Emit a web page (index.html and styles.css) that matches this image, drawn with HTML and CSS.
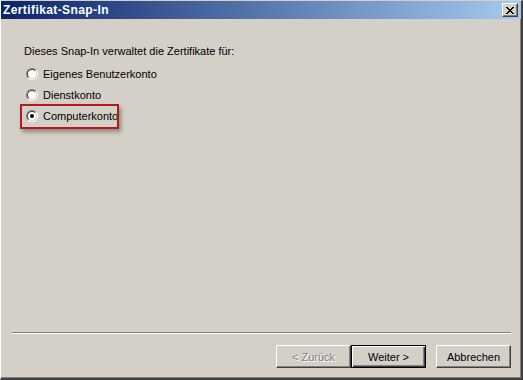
FILE: index.html
```html
<!DOCTYPE html>
<html lang="de">
<head>
<meta charset="utf-8">
<title>Zertifikat-Snap-In</title>
<link rel="stylesheet" href="styles.css">
</head>
<body>
<div class="window">
  <div class="titlebar">
    <span class="title">Zertifikat-Snap-In</span>
    <button class="close" aria-label="Schließen">
      <svg width="8" height="7" viewBox="0 0 8 7"><path d="M0 0h2v1h1v1h2V1h1V0h2v1H7v1H6v1H5v1h1v1h1v1h1v1H6V6H5V5H3v1H2v1H0V6h1V5h1V4h1V3H2V2H1V1H0z" fill="#000"/></svg>
    </button>
  </div>
  <div class="content">
    <p class="intro">Dieses Snap-In verwaltet die Zertifikate für:</p>
    <div class="options">
      <label class="option"><span class="radio"><span class="radio-in"></span></span><span>Eigenes Benutzerkonto</span></label>
      <label class="option"><span class="radio"><span class="radio-in"></span></span><span>Dienstkonto</span></label>
      <label class="option highlighted"><span class="radio"><span class="radio-in"><span class="dot"></span></span></span><span>Computerkonto</span><span class="mark"></span></label>
    </div>
  </div>
  <div class="footer">
    <div class="separator"></div>
    <div class="buttons">
      <div class="pair">
        <button class="btn disabled">&lt; Zurück</button>
        <button class="btn default">Weiter &gt;</button>
      </div>
      <button class="btn">Abbrechen</button>
    </div>
  </div>
</div>
</body>
</html>
```
FILE: styles.css
```css
html, body {
  margin: 0;
  padding: 0;
  background: #d4d0c8;
}
body {
  width: 523px;
  height: 380px;
  overflow: hidden;
  font-family: "Liberation Sans", Arial, sans-serif;
  font-size: 11px;
  color: #000;
}
.window {
  box-sizing: border-box;
  width: 523px;
  height: 380px;
  display: flex;
  flex-direction: column;
  background: #d4d0c8;
  border-top: 1px solid #d4d0c8;
  border-left: 1px solid #ffffff;
  border-right: 2px solid #404040;
  border-bottom: 2px solid #404040;
  box-shadow: inset -1px -1px 0 #808080;
}
.titlebar {
  height: 18px;
  display: flex;
  align-items: center;
  justify-content: space-between;
  padding: 0 3px 0 2px;
  background: linear-gradient(to right, #0a246a, #a6caf0);
  flex: none;
}
.title {
  color: #fff;
  font-weight: bold;
  font-size: 12px;
  letter-spacing: 0.4px;
}
.close {
  box-sizing: border-box;
  width: 16px;
  height: 14px;
  padding: 0;
  display: flex;
  align-items: center;
  justify-content: center;
  background: #d4d0c8;
  border: 1px solid;
  border-color: #ffffff #404040 #404040 #ffffff;
  box-shadow: inset -1px -1px 0 #808080;
}
.content {
  flex: 1;
  padding: 25px 0 0 23px;
}
.intro {
  margin: 0 0 5px 0;
  line-height: 14px;
}
.options {
  display: flex;
  flex-direction: column;
}
.option {
  position: relative;
  display: flex;
  align-items: center;
  height: 21px;
  gap: 5px;
  padding-left: 2px;
}
.radio {
  box-sizing: border-box;
  width: 12px;
  height: 12px;
  border-radius: 50%;
  border: 1px solid;
  border-color: #808080 #ffffff #ffffff #808080;
  flex: none;
}
.radio-in {
  box-sizing: border-box;
  display: flex;
  align-items: center;
  justify-content: center;
  width: 10px;
  height: 10px;
  border-radius: 50%;
  border: 1px solid;
  border-color: #404040 #d4d0c8 #d4d0c8 #404040;
  background: #fff;
}
.dot {
  width: 4px;
  height: 4px;
  border-radius: 50%;
  background: #000;
}
.mark {
  position: absolute;
  left: -4px;
  top: -1px;
  width: 99px;
  height: 25px;
  box-sizing: border-box;
  border: 2px solid #b11d1d;
  box-shadow: 2px 3px 4px rgba(60, 50, 40, 0.45);
}
.footer {
  flex: none;
  padding: 0 10px 10px 11px;
}
.separator {
  border-top: 1px solid #808080;
  border-bottom: 1px solid #ffffff;
  height: 0;
  margin-bottom: 11px;
}
.buttons {
  display: flex;
  justify-content: flex-end;
  gap: 10px;
}
.pair {
  display: flex;
}
.btn {
  box-sizing: border-box;
  width: 75px;
  height: 23px;
  padding: 0;
  font-family: "Liberation Sans", Arial, sans-serif;
  font-size: 11px;
  color: #000;
  background: #d4d0c8;
  border: 1px solid;
  border-color: #ffffff #404040 #404040 #ffffff;
  box-shadow: inset -1px -1px 0 #808080;
}
.btn.default {
  border: 1px solid #000;
  box-shadow: inset 1px 1px 0 #ffffff, inset -1px -1px 0 #404040, inset -2px -2px 0 #808080;
}
.btn.disabled {
  color: #808080;
  text-shadow: 1px 1px 0 #ffffff;
}
```
